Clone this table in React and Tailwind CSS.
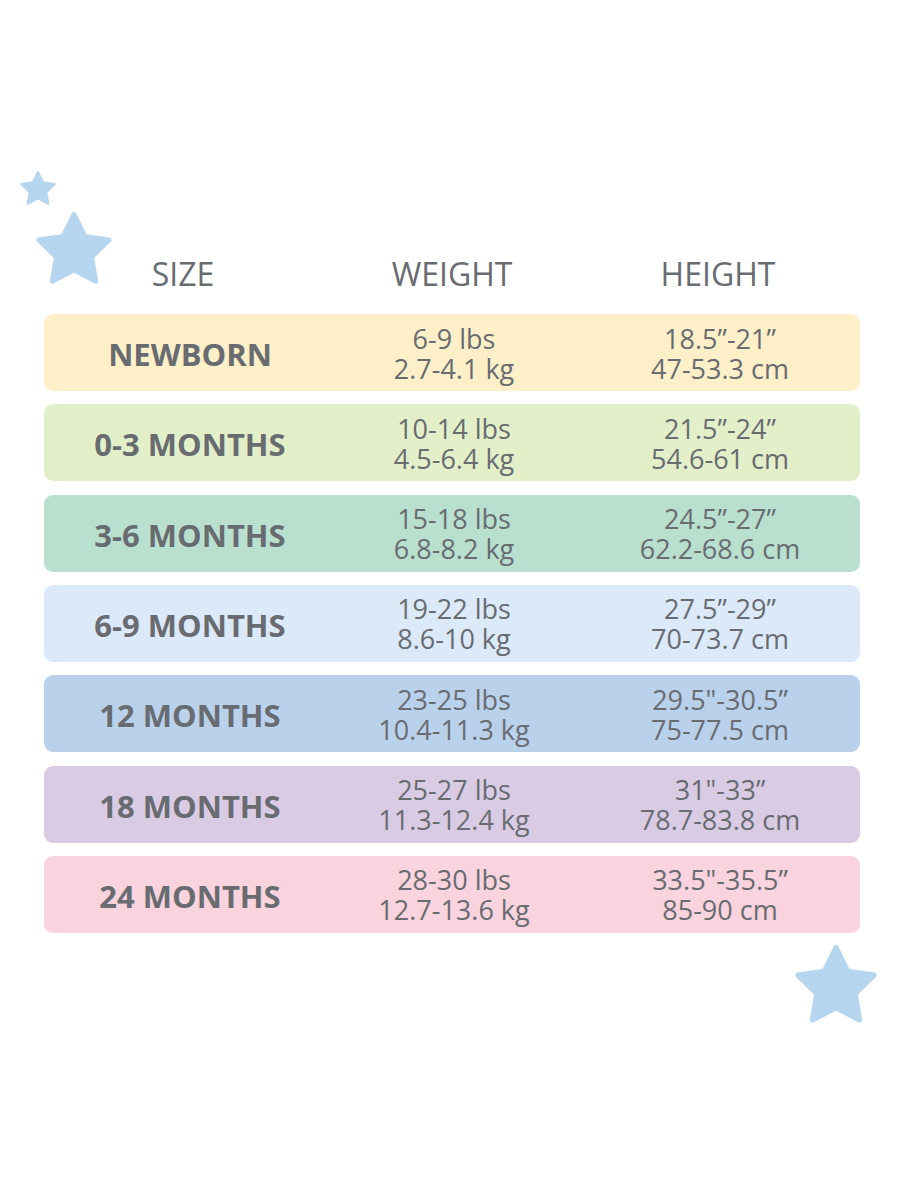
import React from 'react'

const rows = [
  { size: 'NEWBORN', lbs: '6-9 lbs', kg: '2.7-4.1 kg', inch: '18.5”-21”', cm: '47-53.3 cm', bg: 'bg-[#fdf0c9]' },
  { size: '0-3 MONTHS', lbs: '10-14 lbs', kg: '4.5-6.4 kg', inch: '21.5”-24”', cm: '54.6-61 cm', bg: 'bg-[#e3efc9]' },
  { size: '3-6 MONTHS', lbs: '15-18 lbs', kg: '6.8-8.2 kg', inch: '24.5”-27”', cm: '62.2-68.6 cm', bg: 'bg-[#b9e0cf]' },
  { size: '6-9 MONTHS', lbs: '19-22 lbs', kg: '8.6-10 kg', inch: '27.5”-29”', cm: '70-73.7 cm', bg: 'bg-[#dce9f8]' },
  { size: '12 MONTHS', lbs: '23-25 lbs', kg: '10.4-11.3 kg', inch: '29.5"-30.5”', cm: '75-77.5 cm', bg: 'bg-[#bad1ec]' },
  { size: '18 MONTHS', lbs: '25-27 lbs', kg: '11.3-12.4 kg', inch: '31"-33”', cm: '78.7-83.8 cm', bg: 'bg-[#dacbe5]' },
  { size: '24 MONTHS', lbs: '28-30 lbs', kg: '12.7-13.6 kg', inch: '33.5"-35.5”', cm: '85-90 cm', bg: 'bg-[#f9d3dd]' },
]

// chubby rounded star used as decoration
const Star = ({ className }) => (
  <svg viewBox="5 3 90 86" className={className}>
    <polygon
      points="50,6 62.9,32.2 91.8,36.4 70.9,56.8 75.9,85.6 50,72 24.1,85.6 29.1,56.8 8.2,36.4 37.1,32.2"
      fill="#b6d5ef"
      stroke="#b6d5ef"
      strokeWidth="6"
      strokeLinejoin="round"
    />
  </svg>
)

export default function App() {
  return (
    <div
      className="relative w-[900px] h-[1200px] bg-white text-[#686c71] overflow-hidden"
      style={{ fontFamily: '"Open Sans", "Noto Sans", sans-serif' }}
    >
      {/* stars */}
      <Star className="absolute left-[20px] top-[171px] w-[36px] h-[34px]" />
      <Star className="absolute left-[36px] top-[212px] w-[76px] h-[72px]" />
      <Star className="absolute left-[793px] top-[945px] w-[86px] h-[78px]" />

      <div className="pt-[254px] pl-[44px] pr-[40px]">
        {/* header */}
        <div className="flex h-[40px] items-center text-[32px] leading-none mb-[20px]">
          <div className="w-[278px] text-center">SIZE</div>
          <div className="w-[260px] text-center">WEIGHT</div>
          <div className="w-[272px] text-center">HEIGHT</div>
        </div>

        {/* rows */}
        <div className="flex flex-col gap-[13.33px]">
          {rows.map((r) => (
            <div key={r.size} className={`flex items-center h-[77px] rounded-[9px] ${r.bg}`}>
              <div className="w-[292px] text-center font-bold text-[31px] leading-none pt-[4px]">{r.size}</div>
              <div className="w-[236px] text-center text-[27px] leading-[30px] pt-[2px]">
                <div>{r.lbs}</div>
                <div>{r.kg}</div>
              </div>
              <div className="ml-[28px] w-[240px] text-center text-[27px] leading-[30px] pt-[2px]">
                <div>{r.inch}</div>
                <div>{r.cm}</div>
              </div>
            </div>
          ))}
        </div>
      </div>
    </div>
  )
}
